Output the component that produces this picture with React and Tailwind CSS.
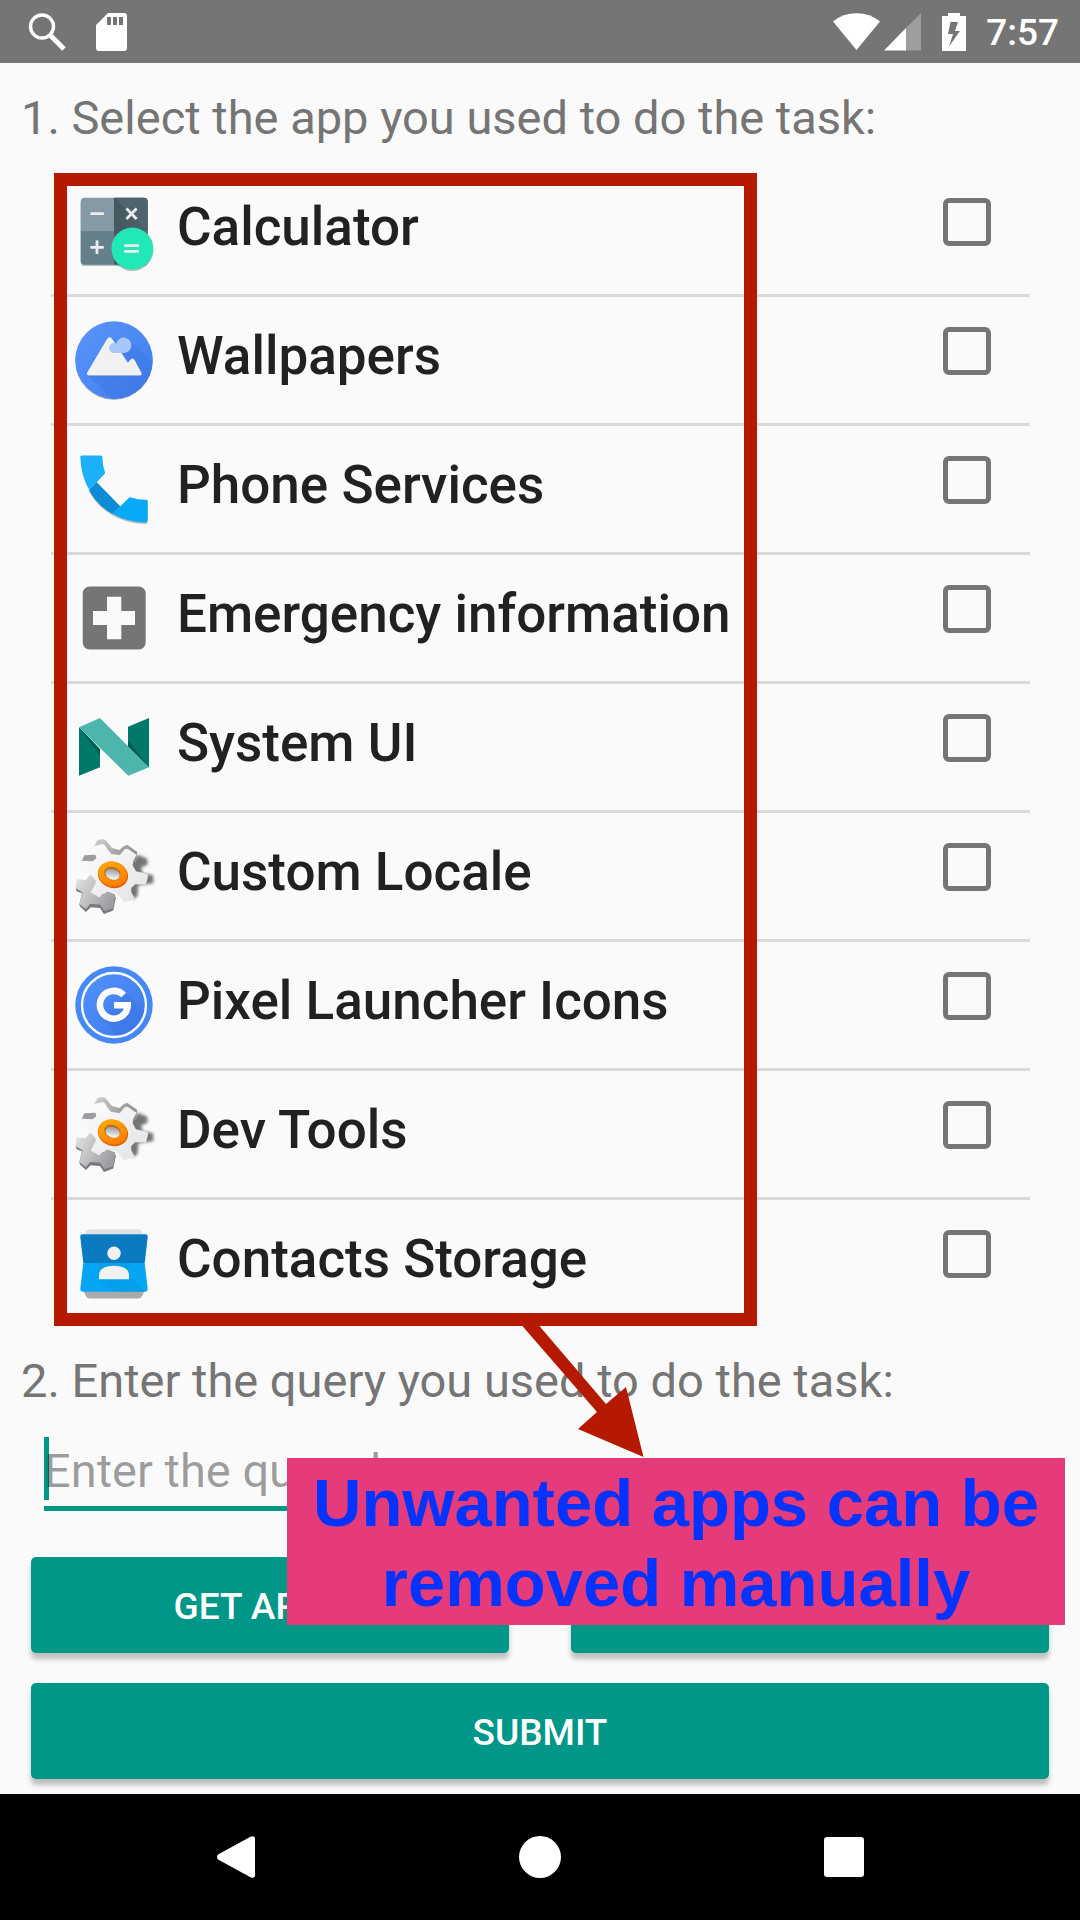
import React from "react";

function Calculator() {
  return (
    <>
      <defs>
        <clipPath id="calc-body"><rect x="6.7" y="6.7" width="67" height="67" rx="4" /></clipPath>
        <linearGradient id="calc-dark" x1="0" y1="0" x2="1" y2="1">
          <stop offset="0" stopColor="#44555d" /><stop offset="1" stopColor="#51676f" />
        </linearGradient>
      </defs>
      <rect x="6.7" y="8" width="67" height="67" rx="4" fill="#000" opacity="0.25" />
      <g clipPath="url(#calc-body)">
        <path d="M6 6h34v34H6z" fill="#859aa4" />
        <path d="M40 6h34v68H40z" fill="url(#calc-dark)" />
        <path d="M40 6l34 34V6z" fill="#4f646e" />
        <path d="M6 40h34v34H6z" fill="#66808b" />
      </g>
      <circle cx="58.3" cy="59" r="21" fill="#000" opacity="0.25" />
      <circle cx="58.3" cy="57.6" r="21" fill="#22e8b8" />
      <path d="M16.4 22.7h13.4M16.4 56.3h13.4M23 49.6V63M52.4 17.6l10.2 10.4M62.6 17.6L52.4 28" stroke="#eee" strokeWidth="2.8" />
      <path d="M50.2 54.6H65M50.2 60.4H65" stroke="#eee" strokeWidth="2.8" />
    </>
  );
}

function Wallpapers() {
  return (
    <>
      <defs>
        <linearGradient id="wall-disc" x1="0" y1="0" x2="1" y2="1">
          <stop offset="0" stopColor="#5a95f8" /><stop offset="1" stopColor="#3f7df0" />
        </linearGradient>
        <clipPath id="wall-clip"><circle cx="40" cy="40" r="38.7" /></clipPath>
      </defs>
      <circle cx="40" cy="41" r="38.7" fill="#24427e" opacity="0.5" />
      <circle cx="40" cy="40" r="38.7" fill="url(#wall-disc)" />
      <path d="M14 55l26 26h42V46L55 20z" fill="#3b76e0" opacity="0.45" clipPath="url(#wall-clip)" />
      <path d="M14.5 56.3h51.6q2.4-.5 1.2-3L60.6 41q-2.3-3-4.6 0l-2 2.5L38 19q-2.5-2.8-4.8 0L13.2 53.3q-.8 2.5 1.3 3z" fill="#2c5cb8" opacity="0.5" />
      <path d="M14.5 55.5h51.6q2.4-.5 1.2-3L60.6 40q-2.3-3-4.6 0l-2 2.7L38 18.7q-2.5-2.8-4.8 0L13.2 52.5q-.8 2.5 1.3 3z" fill="#f1f1f1" />
      <path d="M40 33a5 5 0 1 1 2.2-9.5A7.7 7.7 0 1 1 49.5 33z" fill="#a9c6fa" />
    </>
  );
}

function Phone() {
  return (
    <>
      <path d="M14 41C25 61 45 75 73 75v-4L45 62z" fill="#000" opacity="0.25" />
      <path d="M22.5 33l24 24.500-8 7.500Q23 56.500 15 41z" fill="#0d8bd6" />
      <path d="M7.6 6.500h19q1.800 0 1.800 2 0 8 2.500 14.500.3 1.500-.7 2.500L15.300 41Q6.800 26.500 6.300 8q0-1.500 1.300-1.500z" fill="#1bb0f8" />
      <path d="M38.7 65l15.800-15.800q1.300-1.200 2.800-.7 7 2.400 14.800 2.200 1.700 0 1.700 1.800v19.200q0 1.800-1.800 1.800Q53.500 73.300 38.700 65z" fill="#08a9f6" />
    </>
  );
}

function Emergency() {
  return (
    <path fillRule="evenodd" fill="#757575" d="M15.7 8.5h49a7 7 0 0 1 7 7v49a7 7 0 0 1-7 7h-49a7 7 0 0 1-7-7v-49a7 7 0 0 1 7-7zM33 18.7V33H19v14h14v14.300h14.300V47H61V33H47.300V18.700z" />
  );
}

function SystemUi() {
  return (
    <>
      <path d="M5 20.3l21 22v18L5 68.700z" fill="#00796b" />
      <path d="M54 19.7L75 11v49.300L54 40z" fill="#00796b" />
      <path d="M5 20.3l21 28v-6zM54 33l21 27.300L54 40z" fill="#005b50" />
      <path d="M5 20.3L26 11l49 49.300-20.700 8.400z" fill="#4db6ac" />
    </>
  );
}

function Gear({ id }) {
  return (
    <>
      <defs>
        <linearGradient id={`${id}-face`} x1="0" y1="0" x2="1" y2="1">
          <stop offset="0" stopColor="#ffffff" /><stop offset="0.55" stopColor="#eeeff0" /><stop offset="1" stopColor="#e0e1e2" />
        </linearGradient>
        <linearGradient id={`${id}-back`} x1="0" y1="0" x2="1" y2="0.6">
          <stop offset="0" stopColor="#e6e6e7" /><stop offset="1" stopColor="#9c9da0" />
        </linearGradient>
        <linearGradient id={`${id}-side`} x1="0" y1="0" x2="1" y2="0.5">
          <stop offset="0" stopColor="#cfd0d1" /><stop offset="1" stopColor="#8e9093" />
        </linearGradient>
        <linearGradient id={`${id}-ring`} x1="0" y1="0" x2="1" y2="1">
          <stop offset="0" stopColor="#ffb000" /><stop offset="1" stopColor="#fb7400" />
        </linearGradient>
        <linearGradient id={`${id}-hole`} x1="0" y1="0" x2="0.3" y2="1">
          <stop offset="0" stopColor="#8d8e90" /><stop offset="1" stopColor="#f4f4f4" />
        </linearGradient>
        <filter id={`${id}-soft`} x="-30%" y="-30%" width="160%" height="160%"><feGaussianBlur stdDeviation="4" /></filter>
      </defs>
      <g transform="translate(-4 -4) scale(0.333)">
        <path d="M180 95L205 68L232 80L233 98L214 106L218 124L250 130L250 154L205 160L203 192L190 202L160 170z" fill="#4a4a4a" opacity="0.75" filter={`url(#${id}-soft)`} />
        <path d="M17 166L20 178L36 184L28 218L30 224L48 240L62 226L90 228L102 246L130 236L138 196L80 180z" fill="#77797c" />
        <path d="M17 168L20 142L48 144L60 128L85 148L66 182L88 196L112 178L136 188L130 228L104 238L90 218L60 216L48 232L28 216L38 182z" fill={`url(#${id}-back)`} />
        <path d="M73 42L82 25Q94 19 106 23L126 48L148 54L162 42L172 38L202 60L198 90L120 90L84 62z" fill={`url(#${id}-side)`} />
        <path d="M34 90L43 70L76 68L84 92z" fill="#9b9c9f" />
        <path d="M73 42L100 36Q107 40 112 52L124 66L150 69L162 54Q168 48 174 51L200 68L190 86L188 100L198 118L230 125Q236 128 234 136L228 158L196 157L184 168L184 180L195 202L162 211L150 195L138 183L112 178L100 185L88 197L62 182L76 156L78 148L66 132L60 124L30 118L35 86L68 88L80 78L82 66z" fill={`url(#${id}-face)`} />
        <ellipse cx="129" cy="129" rx="46" ry="39" transform="rotate(18 129 129)" fill="#e85a00" />
        <ellipse cx="128" cy="126" rx="44" ry="37" transform="rotate(18 128 126)" fill={`url(#${id}-ring)`} />
        <ellipse cx="127" cy="124" rx="25" ry="19" transform="rotate(18 127 124)" fill="#b76a2a" />
        <ellipse cx="128" cy="127" rx="22" ry="16" transform="rotate(18 128 127)" fill={`url(#${id}-hole)`} />
      </g>
    </>
  );
}

function PixelLauncher() {
  return (
    <>
      <defs>
        <linearGradient id="pixel-disc" x1="0" y1="0" x2="1" y2="1">
          <stop offset="0" stopColor="#5292f9" /><stop offset="1" stopColor="#3c79ec" />
        </linearGradient>
        <clipPath id="pixel-clip"><circle cx="40" cy="40" r="31" /></clipPath>
      </defs>
      <circle cx="40" cy="40" r="38.7" fill="#4688f5" />
      <circle cx="40" cy="40" r="31" fill="url(#pixel-disc)" />
      <path d="M28 52l24-24 30 30-24 30z" fill="#3a72dc" opacity="0.35" clipPath="url(#pixel-clip)" />
      <circle cx="40" cy="40" r="32" fill="none" stroke="#fff" strokeWidth="2.3" />
      <path d="M49.7 30A13.900 13.900 0 1 0 53.700 40.300H40" fill="none" stroke="#fff" strokeWidth="6.6" />
    </>
  );
}

function Contacts() {
  return (
    <>
      <path d="M11 11q1-4.700 5-4.700h48q4 0 5 4.700z" fill="#e1e1e1" />
      <path d="M9 67h62l-3 6q-1 2.500-4 2.500H16q-3 0-4-2.500z" fill="#aaa" />
      <path d="M8.5 11.300h63q2.600.4 2.200 3L70.700 40H9.300L6.300 14.300q-.4-2.600 2.200-3z" fill="#0b7ac1" />
      <path d="M9.3 40h61.400l3 25.700q.4 2.600-2.200 3h-63q-2.600-.4-2.200-3z" fill="#06a6f4" />
      <path d="M10 40h15v16l14 12.700h32L55 52V40z" fill="#0596df" opacity="0.45" />
      <circle cx="40" cy="30.3" r="6.7" fill="#f1f1f1" />
      <path d="M25 56.300V52q0-9 15-9.300Q55 43 55 52v4.300z" fill="#f1f1f1" />
    </>
  );
}

const apps = [
  { name: "Calculator", icon: <Calculator /> },
  { name: "Wallpapers", icon: <Wallpapers /> },
  { name: "Phone Services", icon: <Phone /> },
  { name: "Emergency information", icon: <Emergency /> },
  { name: "System UI", icon: <SystemUi /> },
  { name: "Custom Locale", icon: <Gear id="locale" /> },
  { name: "Pixel Launcher Icons", icon: <PixelLauncher /> },
  { name: "Dev Tools", icon: <Gear id="dev" /> },
  { name: "Contacts Storage", icon: <Contacts /> },
];

function StatusBar() {
  return (
    <header className="flex h-[63px] items-center justify-between bg-[#757575] pr-[21px] pl-7 text-white">
      <div className="flex items-center gap-7">
        <svg className="h-10 w-10" viewBox="0 0 40 40" fill="none" stroke="currentColor" aria-hidden="true">
          <circle cx="14" cy="14.5" r="11.5" strokeWidth="3.4" />
          <path d="M22.5 23.5L36 37" strokeWidth="5" />
        </svg>
        <svg className="h-10 w-8" viewBox="0 0 32 40" aria-hidden="true">
          <path fillRule="evenodd" fill="currentColor" d="M12 1h16q3 0 3 3v32q0 3-3 3H3q-3 0-3-3V13zM11 5v8h4V5zM17 5v8h4V5zM23 5v8h4V5z" />
        </svg>
      </div>
      <div className="flex items-center">
        <svg className="h-10 w-[47px]" viewBox="0 0 47 40" aria-hidden="true">
          <path fill="currentColor" d="M0 9.5Q10 1.300 23.500 1.300T47 9.500L23.500 38z" />
        </svg>
        <svg className="ml-1 h-10 w-[37px]" viewBox="0 0 37 40" aria-hidden="true">
          <path fill="#fff" opacity="0.3" d="M22 16L37 1v37.500H22z" />
          <path fill="currentColor" d="M0 38.5L22 16v22.500z" />
        </svg>
        <svg className="ml-[21px] h-10 w-6" viewBox="0 0 24 40" aria-hidden="true">
          <path fillRule="evenodd" fill="currentColor" d="M6 1h12v3h6v35H0V4h6zM8.5 10L6 22h5L7 34.500 18 19h-5l3-9z" />
        </svg>
        <time className="ml-5 pt-[3px] text-[37px] leading-10 font-medium">7:57</time>
      </div>
    </header>
  );
}

function AppRow({ app, index }) {
  const id = `app-${index}`;
  return (
    <li className="border-b-[3px] border-[#dadada] last:border-b-0">
      <label htmlFor={id} className="flex h-[126px] items-center pr-[39px] pl-[23px]">
        <svg className="h-20 w-20 shrink-0 overflow-visible" viewBox="0 0 80 80" aria-hidden="true">{app.icon}</svg>
        <span className="ml-[23px] flex-1 pb-2 text-[53px] leading-[62px] font-medium text-[#212121]">{app.name}</span>
        <span className="flex pb-[18px]">
          <input id={id} type="checkbox" className="h-12 w-12 appearance-none rounded-md border-[5px] border-[#757575]" />
        </span>
      </label>
    </li>
  );
}

const buttonClass =
  "h-24 rounded-[5px] bg-[#009688] pt-[3px] text-[37px] font-medium text-white shadow-[0_6px_5px_rgba(0,0,0,0.24)]";

export default function App() {
  return (
    <div className="flex min-h-screen flex-col bg-[#fafafa] font-['Roboto',sans-serif]">
      <StatusBar />
      <main>
        <h2 className="mt-[27px] px-[21px] text-[47px] leading-[56px] text-[#757575]">1. Select the app you used to do the task:</h2>
        <div className="relative mt-[22px] mr-[50px] ml-[51px]">
          <ul>
            {apps.map((app, i) => <AppRow key={app.name} app={app} index={i} />)}
          </ul>
          <div className="pointer-events-none absolute top-[5px] bottom-0 left-[3px] w-[703px] border-[13px] border-[#b51a00]" />
        </div>
        <section className="relative">
          <h2 className="px-[21px] pt-[27px] text-[47px] leading-[56px] text-[#757575]">
            <label htmlFor="query">2. Enter the query you used to do the task:</label>
          </h2>
          <div className="relative mx-11 mt-7 flex">
            <span className="absolute top-0 left-0 h-[63px] w-[5px] bg-[#009688]" />
            <input
              id="query"
              type="text"
              placeholder="Enter the query here"
              className="relative h-[74px] w-full border-b-[5px] border-[#009688] bg-transparent pb-[2px] text-[47px] text-[#212121] outline-none placeholder:text-black/38"
            />
          </div>
          <div className="grid grid-cols-2 gap-x-[62px] gap-y-[30px] px-[31px] pt-[46px] pb-[15px]">
            <button type="button" className={buttonClass}>GET APP ID</button>
            <button type="button" className={buttonClass} aria-label="Clear" />
            <button type="submit" className={`${buttonClass} col-span-2`}>SUBMIT</button>
          </div>
          <svg className="pointer-events-none absolute -top-1 left-[520px] h-[136px] w-[126px]" viewBox="520 1322 126 136" aria-hidden="true">
            <path fill="#b51a00" d="M519 1322h17l70 82 20-17 17.500 70L578 1429l19-17z" />
          </svg>
          <p className="absolute top-[132px] right-[15px] left-[287px] bg-[#e63b7a] pt-[5px] pb-[2px] text-center font-['Liberation_Sans',Arial,sans-serif] text-[67px] leading-[80px] font-bold text-[#0433ff]">
            Unwanted apps can be<br />removed manually
          </p>
        </section>
      </main>
      <nav className="mt-auto grid h-[126px] grid-cols-3 place-items-center bg-black px-[84px] text-white">
        <button type="button" aria-label="Back">
          <svg className="h-11 w-10" viewBox="0 0 40 44"><path fill="currentColor" d="M2 19.5L34.500 1.800Q39 0 39 4v36q0 4-4.500 2.200L2 24.500q-2-2.500 0-5z" /></svg>
        </button>
        <button type="button" aria-label="Home" className="h-[42px] w-[42px] rounded-full bg-white" />
        <button type="button" aria-label="Recent apps" className="h-10 w-10 rounded-[3px] bg-white" />
      </nav>
    </div>
  );
}
